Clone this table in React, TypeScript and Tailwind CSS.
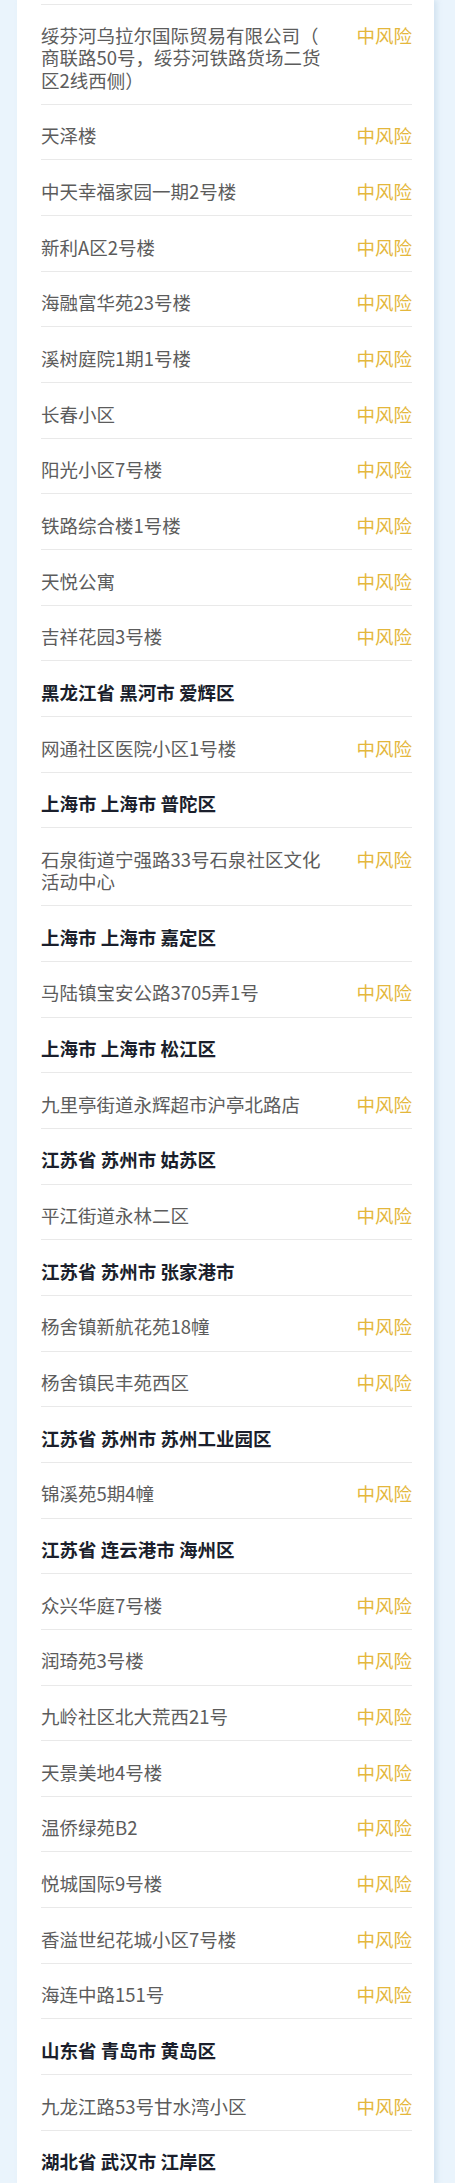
const ROWS: { name: string; head?: boolean }[] = [
  { name: "绥芬河乌拉尔国际贸易有限公司（商联路50号，绥芬河铁路货场二货区2线西侧）" },
  { name: "天泽楼" },
  { name: "中天幸福家园一期2号楼" },
  { name: "新利A区2号楼" },
  { name: "海融富华苑23号楼" },
  { name: "溪树庭院1期1号楼" },
  { name: "长春小区" },
  { name: "阳光小区7号楼" },
  { name: "铁路综合楼1号楼" },
  { name: "天悦公寓" },
  { name: "吉祥花园3号楼" },
  { name: "黑龙江省 黑河市 爱辉区", head: true },
  { name: "网通社区医院小区1号楼" },
  { name: "上海市 上海市 普陀区", head: true },
  { name: "石泉街道宁强路33号石泉社区文化活动中心" },
  { name: "上海市 上海市 嘉定区", head: true },
  { name: "马陆镇宝安公路3705弄1号" },
  { name: "上海市 上海市 松江区", head: true },
  { name: "九里亭街道永辉超市沪亭北路店" },
  { name: "江苏省 苏州市 姑苏区", head: true },
  { name: "平江街道永林二区" },
  { name: "江苏省 苏州市 张家港市", head: true },
  { name: "杨舍镇新航花苑18幢" },
  { name: "杨舍镇民丰苑西区" },
  { name: "江苏省 苏州市 苏州工业园区", head: true },
  { name: "锦溪苑5期4幢" },
  { name: "江苏省 连云港市 海州区", head: true },
  { name: "众兴华庭7号楼" },
  { name: "润琦苑3号楼" },
  { name: "九岭社区北大荒西21号" },
  { name: "天景美地4号楼" },
  { name: "温侨绿苑B2" },
  { name: "悦城国际9号楼" },
  { name: "香溢世纪花城小区7号楼" },
  { name: "海连中路151号" },
  { name: "山东省 青岛市 黄岛区", head: true },
  { name: "九龙江路53号甘水湾小区" },
  { name: "湖北省 武汉市 江岸区", head: true },
];

export default function App() {
  return (
    <div
      className="h-[2183px] overflow-hidden bg-[#eaf4fc]"
      style={{ fontFamily: '"Noto Sans CJK SC", "Noto Sans", sans-serif' }}
    >
      {/* Card */}
      <div className="ml-[17px] w-[417px] bg-white pt-[3.5px] pl-[24px] pr-[22px] shadow-[3px_0_5px_rgba(160,190,215,0.3)]">
        {ROWS.map((row, i) => (
          <div
            key={i}
            className="flex items-start justify-between border-t border-[#e9e9e9] pt-[19.5px] pb-[12.83px] text-[18.5px] leading-[22.33px]"
          >
            {row.head ? (
              <span className="font-bold text-[#1b1f2c]">{row.name}</span>
            ) : (
              <>
                <span className="w-[286px] text-[#5c5c5c] [line-break:anywhere]">
                  {row.name}
                </span>
                <span className="text-[#e4b73c]">中风险</span>
              </>
            )}
          </div>
        ))}
      </div>
    </div>
  );
}
